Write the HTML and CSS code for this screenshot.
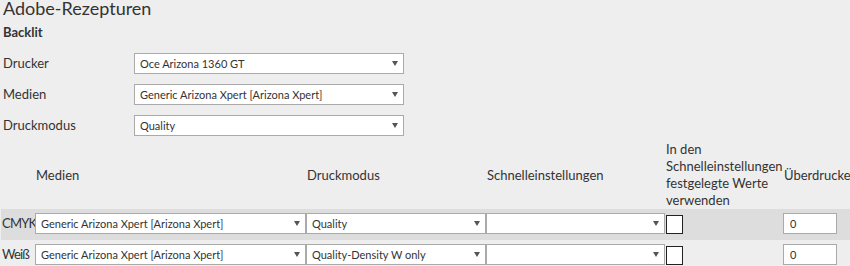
FILE: index.html
```html
<!DOCTYPE html>
<html lang="de">
<head>
    <meta charset="UTF-8">
    <title>Adobe-Rezepturen</title>
    <link rel="stylesheet" href="styles.css">
</head>
<body>

<h1>Adobe-Rezepturen</h1>
<h2>Backlit</h2>

<div class="form">
    <label>Drucker</label>
    <span class="sel"><select><option>Oce Arizona 1360 GT</option></select></span>
    <label>Medien</label>
    <span class="sel"><select><option>Generic Arizona Xpert [Arizona Xpert]</option></select></span>
    <label>Druckmodus</label>
    <span class="sel"><select><option>Quality</option></select></span>
</div>

<table class="rezepte">
    <thead>
        <tr>
            <th class="c-name"></th>
            <th class="c-medien">Medien</th>
            <th class="c-modus">Druckmodus</th>
            <th class="c-schnell">Schnelleinstellungen</th>
            <th class="c-werte">In den Schnelleinstellungen festgelegte Werte verwenden</th>
            <th class="c-ueber">Überdrucken</th>
        </tr>
    </thead>
    <tbody>
        <tr class="alt">
            <td>CMYK</td>
            <td><span class="sel"><select><option>Generic Arizona Xpert [Arizona Xpert]</option></select></span></td>
            <td><span class="sel"><select><option>Quality</option></select></span></td>
            <td><span class="sel"><select><option></option></select></span></td>
            <td><span class="check"></span></td>
            <td><input type="text" value="0"></td>
        </tr>
        <tr>
            <td>Weiß</td>
            <td><span class="sel"><select><option>Generic Arizona Xpert [Arizona Xpert]</option></select></span></td>
            <td><span class="sel"><select><option>Quality-Density W only</option></select></span></td>
            <td><span class="sel"><select><option></option></select></span></td>
            <td><span class="check"></span></td>
            <td><input type="text" value="0"></td>
        </tr>
    </tbody>
</table>

</body>
</html>
```

FILE: styles.css
```css
html { overflow: hidden; }
body { font-family: Lato, "Open Sans", sans-serif; background-color: #eeeeee; color: #333; margin: 0; padding: 0 0 0 3px; }
h1 { font-size: 18px; font-weight: 400; line-height: 16px; margin: 0; padding-top: 0; }
h2 { font-size: 13px; font-weight: 700; line-height: 16px; margin: 8px 0 0 0; }

.form { display: grid; grid-template-columns: 131px 270px; row-gap: 10px; margin-top: 13px; align-items: center; }
.form label { font-size: 13px; line-height: 21px; }

.sel { position: relative; display: block; height: 21px; }
.sel select { appearance: none; -webkit-appearance: none; display: block; width: 100%; height: 21px; margin: 0; padding: 0 20px 0 5px; border: 1px solid #aaa; border-radius: 0; background: white; color: #333; font-family: inherit; font-size: 11px; }
.sel::after { content: ""; position: absolute; right: 6px; top: 8px; border-left: 3.5px solid transparent; border-right: 3.5px solid transparent; border-top: 5px solid #555; pointer-events: none; }

.rezepte { border-collapse: collapse; margin: 5px 0 0 -2px; table-layout: fixed; width: 900px; }
.rezepte th, .rezepte td { box-sizing: border-box; }
.rezepte th { font-size: 13px; font-weight: 400; text-align: left; padding: 0 0 0 1px; line-height: 17px; vertical-align: middle; }
.rezepte th.c-ueber { white-space: nowrap; }
.rezepte td { padding: 4px 0 6px 0; font-size: 13px; line-height: 21px; }
.rezepte td:first-child { padding-left: 1px; letter-spacing: -0.8px; white-space: nowrap; }
.rezepte tr.alt { background: #dddddd; }
.c-name { width: 34px; }
.c-medien { width: 271px; }
.c-modus { width: 180px; }
.c-schnell { width: 179px; }
.c-werte { width: 118px; }

.check { display: block; width: 15px; height: 17px; margin: 1px 0 0 1px; border: 1px solid #222; background: white; }
.rezepte input { display: block; width: 54px; height: 21px; box-sizing: border-box; border: 1px solid #aaa; padding: 0 6px; font-family: inherit; font-size: 11px; color: #333; margin: 0; }
```
